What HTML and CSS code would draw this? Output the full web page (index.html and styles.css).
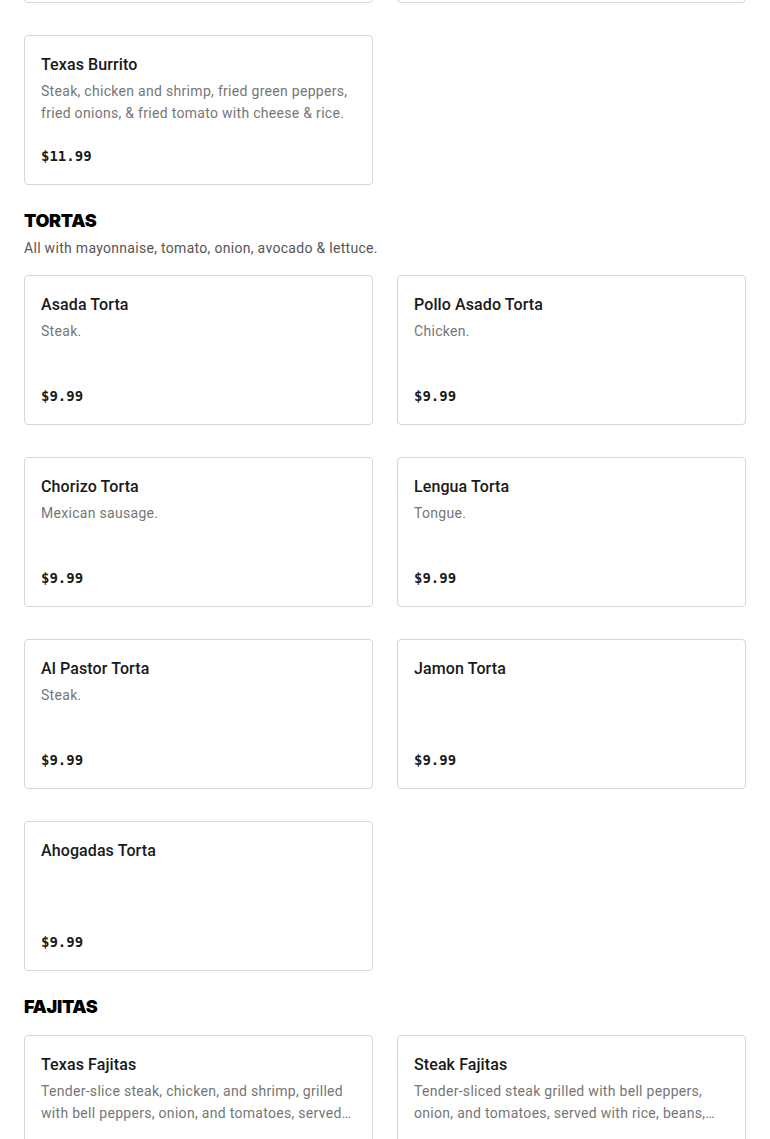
FILE: index.html
```html
<!DOCTYPE html>
<html lang="en">
<head>
<meta charset="utf-8">
<title>Menu</title>
<link rel="stylesheet" href="styles.css">
</head>
<body>
<main class="menu">
  <section class="section">
    <div class="grid">
      <div class="card card-hidden"></div>
      <div class="card card-hidden"></div>
      <div class="card">
        <h3 class="card-title">Texas Burrito</h3>
        <p class="card-desc">Steak, chicken and shrimp, fried green peppers, fried onions, &amp; fried tomato with cheese &amp; rice.</p>
        <div class="card-price">$11.99</div>
      </div>
    </div>
  </section>

  <section class="section">
    <h2 class="section-title">TORTAS</h2>
    <p class="section-sub">All with mayonnaise, tomato, onion, avocado &amp; lettuce.</p>
    <div class="grid">
      <div class="card">
        <h3 class="card-title">Asada Torta</h3>
        <p class="card-desc">Steak.</p>
        <div class="card-price">$9.99</div>
      </div>
      <div class="card">
        <h3 class="card-title">Pollo Asado Torta</h3>
        <p class="card-desc">Chicken.</p>
        <div class="card-price">$9.99</div>
      </div>
      <div class="card">
        <h3 class="card-title">Chorizo Torta</h3>
        <p class="card-desc">Mexican sausage.</p>
        <div class="card-price">$9.99</div>
      </div>
      <div class="card">
        <h3 class="card-title">Lengua Torta</h3>
        <p class="card-desc">Tongue.</p>
        <div class="card-price">$9.99</div>
      </div>
      <div class="card">
        <h3 class="card-title">Al Pastor Torta</h3>
        <p class="card-desc">Steak.</p>
        <div class="card-price">$9.99</div>
      </div>
      <div class="card">
        <h3 class="card-title">Jamon Torta</h3>
        <div class="card-price">$9.99</div>
      </div>
      <div class="card">
        <h3 class="card-title">Ahogadas Torta</h3>
        <div class="card-price">$9.99</div>
      </div>
    </div>
  </section>

  <section class="section">
    <h2 class="section-title">FAJITAS</h2>
    <div class="grid">
      <div class="card">
        <h3 class="card-title">Texas Fajitas</h3>
        <p class="card-desc">Tender-slice steak, chicken, and shrimp, grilled with bell peppers, onion, and tomatoes, served with rice, beans, salad &amp; tortillas.</p>
        <div class="card-price">$16.99</div>
      </div>
      <div class="card">
        <h3 class="card-title">Steak Fajitas</h3>
        <p class="card-desc">Tender-sliced steak grilled with bell peppers, onion, and tomatoes, served with rice, beans, salad &amp; tortillas.</p>
        <div class="card-price">$15.99</div>
      </div>
    </div>
  </section>
</main>
</body>
</html>
```

FILE: styles.css
```css
html, body {
  margin: 0;
  padding: 0;
  background: #ffffff;
}

body {
  font-family: Roboto, "Liberation Sans", sans-serif;
  color: #191919;
}

.menu {
  margin-top: -147px;
  padding: 0 24px;
  display: flex;
  flex-direction: column;
  gap: 24px;
}

.section {
  display: flex;
  flex-direction: column;
}

.section-title {
  margin: 0;
  font-family: Inter, "Liberation Sans", sans-serif;
  font-size: 18px;
  line-height: 24px;
  font-weight: 900;
  color: #000;
  letter-spacing: -0.3px;
}

.section-sub {
  margin: 4px 0 0;
  font-size: 14px;
  line-height: 22px;
  color: #555;
  letter-spacing: 0.3px;
}

.section-title + .grid,
.section-sub + .grid {
  margin-top: 16px;
}

.grid {
  display: grid;
  grid-template-columns: 1fr 1fr;
  column-gap: 24px;
  row-gap: 32px;
}

.card {
  box-sizing: border-box;
  height: 150px;
  border: 1px solid #d6d6d6;
  border-radius: 4px;
  padding: 17px 16px 16px;
  display: flex;
  flex-direction: column;
  overflow: hidden;
}

.card-title {
  margin: 0;
  font-size: 16px;
  line-height: 24px;
  font-weight: 500;
  color: #191919;
  letter-spacing: 0.1px;
}

.card-desc {
  margin: 3px 0 0;
  font-size: 14px;
  line-height: 22px;
  color: #767676;
  letter-spacing: 0.3px;
  display: -webkit-box;
  -webkit-box-orient: vertical;
  -webkit-line-clamp: 2;
  overflow: hidden;
}

.card-price {
  margin-top: auto;
  font-family: "DejaVu Sans Mono", "Liberation Mono", monospace;
  font-weight: 700;
  font-size: 14px;
  line-height: 24px;
  color: #191919;
}
```
